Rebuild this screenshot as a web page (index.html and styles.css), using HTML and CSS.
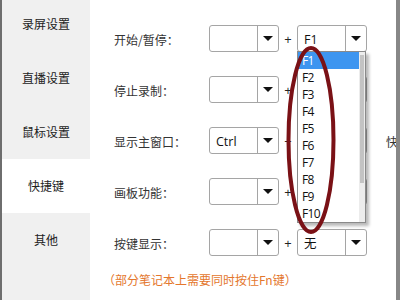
FILE: index.html
```html
<!DOCTYPE html>
<html lang="zh-CN">
<head>
<meta charset="utf-8">
<link rel="stylesheet" href="styles.css">
</head>
<body>
<div class="window">
  <nav class="sidebar">
    <div class="nav-list">
      <div class="nav-item">录屏设置</div>
      <div class="nav-item">直播设置</div>
      <div class="nav-item">鼠标设置</div>
      <div class="nav-item active">快捷键</div>
      <div class="nav-item">其他</div>
    </div>
  </nav>
  <main class="content">
    <div class="rows">
      <div class="row">
        <span class="label">开始/暂停：</span>
        <div class="select"><span class="value"></span><span class="btn"><i class="arrow"></i></span></div>
        <span class="plus">+</span>
        <div class="select open"><span class="value">F1</span><span class="btn"><i class="arrow"></i></span>
          <div class="options">
            <ul class="option-list">
              <li class="selected">F1</li>
              <li>F2</li>
              <li>F3</li>
              <li>F4</li>
              <li>F5</li>
              <li>F6</li>
              <li>F7</li>
              <li>F8</li>
              <li>F9</li>
              <li>F10</li>
            </ul>
            <div class="scrollbar"><div class="thumb"></div></div>
          </div>
        </div>
      </div>
      <div class="row">
        <span class="label">停止录制：</span>
        <div class="select"><span class="value"></span><span class="btn"><i class="arrow"></i></span></div>
        <span class="plus">+</span>
        <div class="select"><span class="value"></span><span class="btn"><i class="arrow"></i></span></div>
      </div>
      <div class="row">
        <span class="label">显示主窗口：</span>
        <div class="select"><span class="value">Ctrl</span><span class="btn"><i class="arrow"></i></span></div>
        <span class="plus">+</span>
        <div class="select"><span class="value"></span><span class="btn"><i class="arrow"></i></span></div>
        <span class="extra">快</span>
      </div>
      <div class="row">
        <span class="label">画板功能：</span>
        <div class="select"><span class="value"></span><span class="btn"><i class="arrow"></i></span></div>
        <span class="plus">+</span>
        <div class="select"><span class="value"></span><span class="btn"><i class="arrow"></i></span></div>
      </div>
      <div class="row">
        <span class="label">按键显示：</span>
        <div class="select"><span class="value"></span><span class="btn"><i class="arrow"></i></span></div>
        <span class="plus">+</span>
        <div class="select"><span class="value">无</span><span class="btn"><i class="arrow"></i></span></div>
      </div>
    </div>
    <p class="note">（部分笔记本上需要同时按住Fn键）</p>
  </main>
  <svg class="annotation" width="400" height="300" viewBox="0 0 400 300">
    <ellipse cx="311" cy="140" rx="22.5" ry="92" fill="none" stroke="#7a1116" stroke-width="4"/>
  </svg>
</div>
</body>
</html>
```

FILE: styles.css
```css
* { box-sizing: border-box; }
html, body { margin: 0; padding: 0; }
body {
  width: 400px;
  height: 300px;
  overflow: hidden;
  background: #fff;
  font-family: "Noto Sans CJK SC", "Open Sans", sans-serif;
  font-size: 12px;
  color: #222;
}
.window {
  position: relative;
  display: flex;
  width: 400px;
  height: 300px;
  border-left: 2px solid #6e6e6e;
  border-right: 4px solid #878787;
  overflow: hidden;
}
.sidebar {
  width: 88px;
  flex: none;
  background: #f0f0f0;
}
.nav-list {
  margin-top: -3px;
  display: flex;
  flex-direction: column;
}
.nav-item {
  height: 54px;
  display: flex;
  align-items: center;
  justify-content: center;
  font-size: 12px;
  color: #222;
  padding-bottom: 1px;
}
.nav-item.active { background: #fff; }
.content {
  flex: 1;
  min-width: 0;
  padding: 25px 0 0 24px;
  background: #fff;
  white-space: nowrap;
  overflow: hidden;
}
.rows {
  display: flex;
  flex-direction: column;
  gap: 24px;
}
.row {
  display: flex;
  align-items: center;
  height: 27px;
}
.label {
  width: 95px;
  flex: none;
  color: #333;
  padding-top: 2px;
}
.plus {
  width: 18px;
  flex: none;
  text-align: center;
  font-family: "Open Sans", sans-serif;
  font-size: 13px;
  color: #222;
  padding-top: 1px;
}
.extra {
  margin-left: 19px;
  color: #333;
  padding-top: 2px;
}
.select {
  position: relative;
  width: 70px;
  height: 27px;
  flex: none;
  display: flex;
  border: 1px solid #a5a5a5;
  border-radius: 3px;
  background: #fff;
}
.value {
  flex: 1;
  padding-left: 6px;
  font-family: "Open Sans", "Noto Sans CJK SC", sans-serif;
  font-size: 12.5px;
  line-height: 27px;
  color: #111;
}
.btn {
  width: 21px;
  flex: none;
  border-left: 1px solid #a5a5a5;
  display: flex;
  align-items: center;
  justify-content: center;
}
.arrow {
  width: 0;
  height: 0;
  border-left: 5px solid transparent;
  border-right: 5px solid transparent;
  border-top: 5px solid #111;
}
.options {
  position: absolute;
  top: 100%;
  left: -1px;
  width: 69px;
  display: flex;
  background: #fff;
  border: 1px solid #8a8a8a;
  box-shadow: 3px 3px 3px rgba(0, 0, 0, 0.28);
  z-index: 2;
}
.option-list {
  list-style: none;
  margin: 0;
  padding: 0;
  width: 61px;
}
.option-list li {
  height: 17px;
  line-height: 17px;
  padding-left: 4px;
  font-family: "Open Sans", sans-serif;
  font-size: 12px;
  letter-spacing: -0.6px;
  color: #111;
}
.option-list li.selected {
  background: #3d95f0;
  color: #fff;
}
.scrollbar {
  flex: 1;
  background: #ececec;
  padding: 3px 1px 0 1px;
}
.thumb {
  height: 128px;
  background: #c3c3c3;
}
.note {
  margin: 16px 0 0 -11px;
  font-size: 12px;
  color: #e4772d;
  line-height: 16px;
}
.annotation {
  position: absolute;
  left: -2px;
  top: 0;
  pointer-events: none;
  z-index: 5;
}
```
